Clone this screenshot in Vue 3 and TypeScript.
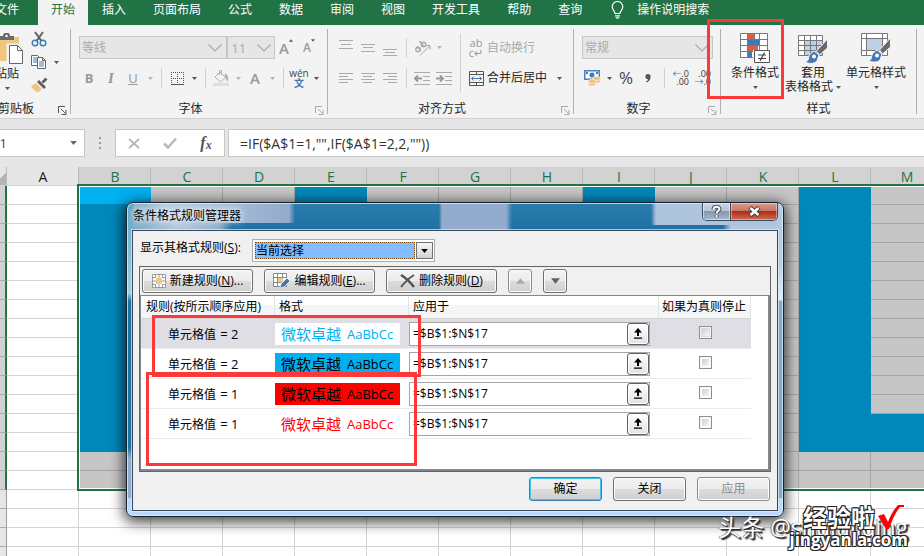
<script setup lang="ts">
import { ref } from 'vue'

interface Rule {
  label: string
  test: string
  style: string
  range: string
  stop: boolean
}

const tabs = ['插入', '页面布局', '公式', '数据', '审阅', '视图', '开发工具', '帮助', '查询']
const columns = ['A', 'B', 'C', 'D', 'E', 'F', 'G', 'H', 'I', 'J', 'K', 'L', 'M']
const rowCount = 20
const selectedRows = 16

const fontName = ref('等线')
const fontSize = ref('11')
const numberFormat = ref('常规')
const nameBox = ref('B1')
const formula = ref('=IF($A$1=1,"",IF($A$1=2,2,""))')
const scope = ref('当前选择')

const rules = ref<Rule[]>([
  { label: '单元格值', test: '= 2', style: 'cyan-text', range: '=$B$1:$N$17', stop: false },
  { label: '单元格值', test: '= 2', style: 'cyan-fill', range: '=$B$1:$N$17', stop: false },
  { label: '单元格值', test: '= 1', style: 'red-fill', range: '=$B$1:$N$17', stop: false },
  { label: '单元格值', test: '= 1', style: 'red-text', range: '=$B$1:$N$17', stop: false },
])

function cellClass(row: number, col: string): string[] {
  const out: string[] = []
  if (col !== 'A' && row <= selectedRows) out.push('picked')
  const tall = ['B', 'E', 'I', 'L'].includes(col) && row <= 14
  const foot = col === 'M' && row >= 13 && row <= 14
  if (col === 'B' && row === 1) out.push('bright')
  else if (tall || foot) out.push('blue')
  return out
}
</script>

<template>
  <div class="app">
    <svg class="defs" aria-hidden="true">
      <symbol id="caret" viewBox="0 0 5 3"><path d="M0 0h5L2.500 3z" fill="currentColor" /></symbol>
      <symbol id="chevron" viewBox="0 0 14 8"><path d="M.5.5L7 7L13.500.5" fill="none" stroke="currentColor" stroke-width="1.200" /></symbol>
      <symbol id="launcher" viewBox="0 0 9 9">
        <path d="M.5 7V.5H7M3 3l4.500 4.500M8 4v4.500H3.500" fill="none" stroke="currentColor" />
      </symbol>
    </svg>

    <nav class="tabs">
      <a class="tab file" href="#">文件</a>
      <a class="tab active" href="#">开始</a>
      <a v-for="t in tabs" :key="t" class="tab" href="#">{{ t }}</a>
      <a class="tell" href="#">
        <svg width="13" height="18" viewBox="0 0 13 18" fill="none" stroke="#fff" stroke-width="1.200">
          <path d="M4 12.500C4 10 1.200 9 1.200 5.800a5.300 5.300 0 0 1 10.600 0C11.800 9 9 10 9 12.500zM4 14.800h5M4.800 16.900h3.400" />
        </svg>
        操作说明搜索
      </a>
    </nav>

    <div class="ribbon">
      <section class="group clip">
        <div class="body">
          <button class="big paste">
            <svg width="34" height="32" viewBox="0 0 34 32">
              <path d="M2 4h28v24H2z" fill="#efc67d" />
              <path d="M10 7V3h4a3.500 3.500 0 0 1 7 0h4v4z" fill="#6a6a6a" /><circle cx="17.500" cy="3" r="1.200" fill="#fff" />
              <path d="M19 12h10l5 5v14H19z" fill="#fff" stroke="#f3f3f3" stroke-width="3" />
              <path d="M20.500 12.500h8l5 5v13h-13zM28.500 12.500v5h5" fill="#fff" stroke="#666" />
            </svg>
            <span>粘贴</span>
            <svg class="caret"><use href="#caret" /></svg>
          </button>
          <div class="clip-tools">
            <button class="slot" aria-label="剪切">
              <svg width="16" height="16" viewBox="0 0 16 16" fill="none">
                <path d="M4 1l6.500 9M12 1L5.500 10" stroke="#606060" stroke-width="2" />
                <circle cx="4" cy="12" r="2.800" stroke="#3f78b5" stroke-width="1.400" /><circle cx="12" cy="12" r="2.800" stroke="#3f78b5" stroke-width="1.400" />
              </svg>
            </button>
            <div class="row">
              <button class="slot" aria-label="复制">
                <svg width="16" height="16" viewBox="0 0 16 16" fill="#fff" stroke="#666">
                  <path d="M.5 1.500h6l2 2v8h-8z" /><path d="M2 4h4M2 6h4M2 8h4" stroke="#3f78b5" />
                  <path d="M6.500 3.500h5l3 3v8h-8zM11.500 3.500v3h3" /><path d="M8 8h5M8 10h5M8 12h5" stroke="#3f78b5" />
                </svg>
              </button>
              <button class="drop" aria-label="复制选项"><svg class="caret"><use href="#caret" /></svg></button>
            </div>
            <button class="slot" aria-label="格式刷">
              <svg width="18" height="16" viewBox="0 0 18 16">
                <path d="M1 9l5-3 6 6-4 3.500C5 14 2 12 1 9z" fill="#efc67d" />
                <path d="M7 5l2-2 7 7-2 2z" fill="#5d5d5d" /><path d="M11.500 4.500l4-4 2 2-4 4z" fill="#5d5d5d" />
              </svg>
            </button>
          </div>
        </div>
        <footer><span>剪贴板</span><button class="launch dark" aria-label="剪贴板设置"><svg width="9" height="9"><use href="#launcher" /></svg></button></footer>
      </section>

      <section class="group font">
        <div class="body stack">
          <div class="row top">
            <label class="combo wide"><select v-model="fontName" aria-label="字体"><option>等线</option></select><svg width="14" height="8"><use href="#chevron" /></svg></label>
            <label class="combo size"><select v-model="fontSize" aria-label="字号"><option>11</option></select><svg width="14" height="8"><use href="#chevron" /></svg></label>
            <button class="slot glyph"><b>A</b><svg class="caret up"><use href="#caret" /></svg></button>
            <button class="slot glyph small"><b>A</b><svg class="caret mark"><use href="#caret" /></svg></button>
          </div>
          <div class="row">
            <button class="slot letter"><b>B</b></button>
            <button class="slot letter"><i>I</i></button>
            <button class="slot letter"><u>U</u></button>
            <button class="drop pale" aria-label="下划线选项"><svg class="caret"><use href="#caret" /></svg></button>
            <span class="sep"></span>
            <button class="slot" aria-label="边框">
              <svg width="13" height="13" viewBox="0 0 13 13" stroke="#555"><path d="M0 .5h13M0 6.500h13M.5 0v12M6.500 0v12M12.500 0v12" stroke-dasharray="1 1" /><path d="M0 12.500h13" /></svg>
            </button>
            <button class="drop" aria-label="边框选项"><svg class="caret"><use href="#caret" /></svg></button>
            <span class="sep"></span>
            <button class="slot" aria-label="填充颜色">
              <svg width="16" height="16" viewBox="0 0 16 16" fill="none" stroke="#b3b0b0"><path d="M2 7l5-5 5.500 5.500L7.500 12zM6.500 5V.5h2V5" /><path d="M12 4c3 1 3 3 2.500 7-1-1.500-2-3-2.500-7z" fill="#b3b0b0" /><path d="M0 14.500h16" stroke="#e0dce0" stroke-width="3" /></svg>
            </button>
            <button class="drop pale" aria-label="填充选项"><svg class="caret"><use href="#caret" /></svg></button>
            <button class="slot glyph"><b>A</b></button>
            <button class="drop pale" aria-label="字体颜色选项"><svg class="caret"><use href="#caret" /></svg></button>
            <span class="sep"></span>
            <button class="slot wen"><span>wén</span><b>文</b></button>
            <button class="drop" aria-label="拼音选项"><svg class="caret"><use href="#caret" /></svg></button>
          </div>
        </div>
        <footer><span>字体</span><button class="launch" aria-label="字体设置"><svg width="9" height="9"><use href="#launcher" /></svg></button></footer>
      </section>

      <section class="group align">
        <div class="body">
          <div class="stack">
            <div class="row top">
              <button class="slot" aria-label="顶端对齐"><svg width="14" height="18" viewBox="0 0 14 18" stroke="#aaa"><path d="M0 1.500h14M2 5.500h10M0 9.500h14" /></svg></button>
              <button class="slot" aria-label="垂直居中"><svg width="14" height="18" viewBox="0 0 14 18" stroke="#aaa"><path d="M0 5.500h14M2 8.500h10M0 12.500h14" /></svg></button>
              <button class="slot" aria-label="底端对齐"><svg width="14" height="18" viewBox="0 0 14 18" stroke="#aaa"><path d="M0 10.500h14M2 13.500h10M0 16.500h14" /></svg></button>
              <span class="sep"></span>
              <button class="slot" aria-label="方向"><svg width="17" height="16" viewBox="0 0 17 16" fill="none" stroke="#a8a8a8"><path d="M6 15.500L15.500 6M12 5.500h4v4" /><circle cx="4" cy="9.500" r="2.200" stroke-width="1.400" /><path d="M3 6.500l4 4M5.500 1l4.500 5.500" stroke-width="1.400" /><circle cx="9.500" cy="4.500" r="2.200" stroke-width="1.400" /></svg></button>
              <button class="drop pale" aria-label="方向选项"><svg class="caret"><use href="#caret" /></svg></button>
            </div>
            <div class="row">
              <button class="slot" aria-label="左对齐"><svg width="14" height="11" viewBox="0 0 14 11" stroke="#aaa"><path d="M0 .5h14M0 3.500h9M0 6.500h14M0 9.500h9" /></svg></button>
              <button class="slot" aria-label="居中"><svg width="14" height="11" viewBox="0 0 14 11" stroke="#aaa"><path d="M0 .5h14M2 3.500h9M0 6.500h14M2 9.500h9" /></svg></button>
              <button class="slot" aria-label="右对齐"><svg width="14" height="11" viewBox="0 0 14 11" stroke="#aaa"><path d="M0 .5h14M5 3.500h9M0 6.500h14M5 9.500h9" /></svg></button>
              <span class="sep"></span>
              <button class="slot" aria-label="减少缩进"><svg width="16" height="13" viewBox="0 0 16 13" fill="none" stroke="#aaa"><path d="M0 .5h16M9 4.500h7M9 8.500h7M0 12.500h16" /><path d="M8 6.500H1M4 3.500l-3 3 3 3" stroke-width="2" stroke="#999" /></svg></button>
              <button class="slot" aria-label="增加缩进"><svg width="16" height="13" viewBox="0 0 16 13" fill="none" stroke="#aaa"><path d="M0 .5h16M9 4.500h7M9 8.500h7M0 12.500h16" /><path d="M0 6.500h7M4 3.500l3 3-3 3" stroke-width="2" stroke="#999" /></svg></button>
            </div>
          </div>
          <span class="sep tall"></span>
          <div class="stack">
            <button class="row top wide-btn pale-text">
              <span class="slot wrap"><span>ab</span><span>c↵</span></span>自动换行
            </button>
            <button class="row wide-btn">
              <span class="slot"><svg width="15" height="15" viewBox="0 0 15 15" fill="none" stroke="#555"><path d="M.5.5h14v14H.5zM.5 3.500h14M.5 11.500h14M7.500.5v3M7.500 11.500v3" /><path d="M2.500 7.500h10M4.500 5.500l-2 2 2 2M10.500 5.500l2 2-2 2" stroke="#3f78b5" /></svg></span>合并后居中
              <svg class="caret"><use href="#caret" /></svg>
            </button>
          </div>
        </div>
        <footer><span>对齐方式</span><button class="launch" aria-label="对齐设置"><svg width="9" height="9"><use href="#launcher" /></svg></button></footer>
      </section>

      <section class="group number">
        <div class="body stack">
          <div class="row top">
            <label class="combo num"><select v-model="numberFormat" aria-label="数字格式"><option>常规</option></select><svg width="14" height="8"><use href="#chevron" /></svg></label>
          </div>
          <div class="row">
            <button class="slot" aria-label="会计数字格式"><svg width="17" height="16" viewBox="0 0 17 16"><path d="M.75.75h14.500v8.500H.75z" fill="#fff" stroke="#4a80bb" stroke-width="1.500" /><circle cx="8" cy="5" r="2.500" fill="#3f78b5" /><path d="M2 2h2v2H2zM12 2h2v2h-2z" fill="#3f78b5" /><g fill="#ecc078" stroke="#f3f3f3" stroke-width=".8"><ellipse cx="12.500" cy="11" rx="4" ry="2" /><ellipse cx="12.500" cy="8.500" rx="4" ry="2" /><ellipse cx="8" cy="14" rx="4" ry="2" /><ellipse cx="8" cy="11.500" rx="4" ry="2" /></g></svg></button>
            <button class="drop" aria-label="货币选项"><svg class="caret"><use href="#caret" /></svg></button>
            <button class="slot percent">%</button>
            <button class="slot" aria-label="千位分隔"><svg width="6" height="9" viewBox="0 0 6 9"><path d="M3 0a2.600 2.600 0 0 1 2.600 2.600C5.600 6 4 8 1 8.500V7.500C2.500 7 3 6.200 3 5.200A2.600 2.600 0 0 1 3 0z" fill="#555" /></svg></button>
            <span class="sep"></span>
            <button class="slot dec"><span><em>←</em>.0</span><span>.00</span></button>
            <button class="slot dec"><span>.00</span><span><em>→</em>.0</span></button>
          </div>
        </div>
        <footer><span>数字</span><button class="launch" aria-label="数字设置"><svg width="9" height="9"><use href="#launcher" /></svg></button></footer>
      </section>

      <section class="group styles">
        <div class="body">
          <button class="big">
            <svg width="30" height="31" viewBox="0 0 30 31">
              <path d="M.5.500h27v24H.5z" fill="#fff" /><path d="M8 1h6v5H8zM8 13h10v5H8z" fill="#d9603f" /><path d="M8 7h11v5H8zM8 19h4v5H8z" fill="#4279b4" />
              <path d="M.5.500h27v24H.5zM.5 6.500h27M.5 12.500h27M.5 18.500h27M7.500.5v24M19.500.5v24M14.500.5v6" fill="none" stroke="#777" />
              <path d="M13 17h16.500v13H13z" fill="#f3f3f3" /><path d="M14.500 17.500h15v12h-15z" fill="#fff" stroke="#555" />
              <path d="M18 22h8M18 25.500h8M24.500 19.500l-4.500 8.500" stroke="#444" stroke-width="1.200" />
            </svg>
            <span>条件格式</span>
            <svg class="caret"><use href="#caret" /></svg>
          </button>
          <button class="big table-style">
            <svg width="30" height="31" viewBox="0 0 30 31">
              <path d="M.5 2.500h24v20H.5z" fill="#fff" /><path d="M7 8h18v15H7z" fill="#bcd0e6" />
              <path d="M.5 2.500h24v20H.5zM.5 7.500h24M.5 12.500h24M.5 17.500h24M6.500 2.500v20M12.500 2.500v20M18.500 2.500v20" fill="none" stroke="#777" />
              <path d="M29.500 6v9l-8 7-3-4z" fill="#6b6b6b" stroke="#f3f3f3" /><path d="M16 18l5 4-2 6c-3 3-8 3-12 1 4-1 3-3 4-6 1-2 3-4 5-5z" fill="#4279b4" stroke="#f3f3f3" /><circle cx="16" cy="23.500" r="2" fill="#fff" />
            </svg>
            <span>套用</span>
            <span class="line">表格格式 <svg class="caret"><use href="#caret" /></svg></span>
          </button>
          <button class="big cell-style">
            <svg width="30" height="31" viewBox="0 0 30 31">
              <path d="M.5.500h26v22H.5z" fill="#fff" /><path d="M6 6h15v11H6z" fill="#bcd0e6" />
              <path d="M.5.500h26v22H.5zM.5 5.500h26M.5 17.500h26M5.500.5v22M21.500.5v22" fill="none" stroke="#777" />
              <path d="M29.500 5v9l-8 7-3-4z" fill="#6b6b6b" stroke="#f3f3f3" /><path d="M16 17l5 4-2 6c-3 3-8 2-12 1 4-1 3-3 4-6 1-2 3-4 5-5z" fill="#4279b4" stroke="#f3f3f3" /><circle cx="16" cy="22.500" r="2" fill="#fff" />
            </svg>
            <span>单元格样式</span>
            <svg class="caret"><use href="#caret" /></svg>
          </button>
        </div>
        <footer><span>样式</span></footer>
      </section>
      <div class="hint hint-ribbon"></div>
    </div>

    <div class="formula-bar">
      <div class="name-box"><input v-model="nameBox" aria-label="名称框" /><svg class="name-caret"><use href="#caret" /></svg></div>
      <svg class="dots" width="3" height="12" viewBox="0 0 3 12" fill="#999"><path d="M0 0h2v2H0zM0 5h2v2H0zM0 10h2v2H0z" /></svg>
      <div class="fx-box">
        <button aria-label="取消"><svg width="12" height="11" viewBox="0 0 12 11" stroke="#b8b8b8" stroke-width="2"><path d="M1 1l10 9M11 1L1 10" /></svg></button>
        <button aria-label="输入"><svg width="14" height="12" viewBox="0 0 14 12" fill="none" stroke="#b8b8b8" stroke-width="2.500"><path d="M1 6.500l4 4L13 1.500" /></svg></button>
        <button class="fx">f<small>x</small></button>
      </div>
      <input v-model="formula" class="formula" aria-label="编辑栏" />
    </div>

    <main class="sheet">
      <table class="grid">
        <thead>
          <tr>
            <th class="corner"></th>
            <th v-for="c in columns" :key="c" :class="{ on: c !== 'A' }">{{ c }}</th>
          </tr>
        </thead>
        <tbody>
          <tr v-for="r in rowCount" :key="r">
            <th :class="{ on: r <= selectedRows }"></th>
            <td v-for="c in columns" :key="c" :class="cellClass(r, c)"></td>
          </tr>
        </tbody>
      </table>
      <div class="selection"></div>
    </main>

    <div class="dialog" role="dialog" aria-labelledby="dlg-title">
      <header class="title">
        <h1 id="dlg-title">条件格式规则管理器</h1>
        <div class="sys">
          <button class="help" aria-label="帮助"><svg width="11" height="13" viewBox="0 0 11 13" fill="none"><path d="M2.500 4.500C2.500 1 8.500 1 8.500 4c0 2-3 2-3 4.500M5.500 10v2" stroke="#434b5c" stroke-width="4" /><path d="M2.500 4.500C2.500 1 8.500 1 8.500 4c0 2-3 2-3 4.500M5.500 10v2" stroke="#fff" stroke-width="2" /></svg></button>
          <button class="close" aria-label="关闭窗口"><svg width="13" height="11" viewBox="0 0 13 11"><path d="M2 1.500l9 8M11 1.500l-9 8" stroke="#4b3b45" stroke-width="4.500" /><path d="M2.500 2l8 7M10.500 2l-8 7" stroke="#fff" stroke-width="2.600" /></svg></button>
        </div>
      </header>
      <div class="client">
        <div class="scope">
          <label for="scope">显示其格式规则(<u>S</u>):</label>
          <span class="scope-box">
            <select id="scope" v-model="scope"><option>当前选择</option></select>
            <span class="scope-arrow"><svg width="7" height="4"><use href="#caret" /></svg></span>
          </span>
        </div>
        <div class="panel">
          <div class="tools">
            <button class="btn tool">
              <svg width="14" height="14" viewBox="0 0 14 14"><path d="M.5.500h13v13H.5z" fill="#fff" /><path d="M4 4h6v6H4z" fill="#efc88c" /><path d="M.5.500h13v13H.5zM3.500 0v4M7 0v4M10.500 0v4M3.500 10v4M7 10v4M10.500 10v4M0 3.500h4M0 7h4M0 10.500h4M10 3.500h4M10 7h4M10 10.500h4" fill="none" stroke="#888" stroke-width=".8" /></svg>
              <span>新建规则(<u>N</u>)...</span>
            </button>
            <button class="btn tool">
              <svg width="17" height="16" viewBox="0 0 17 16"><path d="M.5.500h13v13H.5z" fill="#fff" /><path d="M4 4h6v6H4z" fill="#efc88c" /><path d="M.5.500h13v13H.5zM4.500 0v14M9.500 0v4M0 4.500h14M0 9.500h8" fill="none" stroke="#888" /><path d="M7 15l1-4 6-6 3 3-6 6z" fill="#4279b4" stroke="#eee" stroke-width=".8" /></svg>
              <span>编辑规则(<u>E</u>)...</span>
            </button>
            <button class="btn tool">
              <svg width="15" height="14" viewBox="0 0 15 14" fill="none" stroke="#555"><path d="M1 1c5 3 9 7 13 12" stroke-width="2.500" /><path d="M14 1C9 4 5 8 1 13" stroke-width="2" /></svg>
              <span>删除规则(<u>D</u>)</span>
            </button>
            <button class="btn move" disabled aria-label="上移"><svg class="flip" width="9" height="6"><use href="#caret" /></svg></button>
            <button class="btn move" aria-label="下移"><svg width="9" height="6"><use href="#caret" /></svg></button>
          </div>
          <div class="list">
            <table class="rules">
              <thead>
                <tr><th class="c-rule">规则(按所示顺序应用)</th><th class="c-format">格式</th><th>应用于</th><th class="c-stop">如果为真则停止</th></tr>
              </thead>
              <tbody>
                <tr v-for="(r, i) in rules" :key="i" :class="{ current: i === 0 }">
                  <td class="name">{{ r.label }} <span>{{ r.test }}</span></td>
                  <td><span class="sample" :class="r.style">微软卓越 <small>AaBbCc</small></span></td>
                  <td>
                    <span class="range">
                      <input v-model="r.range" :aria-label="'应用于 ' + (i + 1)" />
                      <button aria-label="选择区域"><svg width="10" height="11" viewBox="0 0 10 11"><path d="M5 0l4 4.500H6V8H4V4.500H1zM1 9.500h8v1.200H1z" /></svg></button>
                    </span>
                  </td>
                  <td class="stop"><input v-model="r.stop" type="checkbox" :aria-label="'如果为真则停止 ' + (i + 1)" /></td>
                </tr>
              </tbody>
            </table>
          </div>
        </div>
        <div class="actions">
          <button class="btn default">确定</button>
          <button class="btn">关闭</button>
          <button class="btn" disabled>应用</button>
        </div>
      </div>
    </div>

    <div class="hint hint-two"></div>
    <div class="hint hint-one"></div>

    <div class="credit">头条 @shujuliqing</div>
    <div class="brand">
      <div class="brand-top">经验啦<svg width="26" height="25" viewBox="0 0 26 25"><path d="M0 11l6-2 4 8C13 9 17 3 20 0h6v2h-4C17 8 14 16 11 24H8z" fill="#f00" /></svg></div>
      <div class="brand-url">jingyanla.com</div>
    </div>
  </div>
</template>

<style>
body { margin: 0; overflow: hidden; }
</style>

<style scoped>
.app { position: relative; display: flex; flex-direction: column; height: 100vh; overflow: hidden; background: #e6e6e6; font: 12px/16px "Open Sans", "Noto Sans CJK SC", sans-serif; color: #262626; }
.app * { box-sizing: border-box; }
.defs { position: absolute; width: 0; height: 0; }
button, input, select { font: inherit; color: inherit; margin: 0; padding: 0; border: 0; background: none; border-radius: 0; outline: none; }
svg { flex: none; display: block; }
.caret { width: 5px; height: 3px; color: #555; }

.tabs { display: flex; gap: 1px; height: 25px; flex: none; background: #217346; }
.tab { color: #fff; text-decoration: none; padding: 0 13px; line-height: 20px; white-space: nowrap; }
.tab.file { width: 37px; display: flex; justify-content: flex-end; padding: 0 18px 0 0; }
.tab.active { background: #f3f3f3; color: #217346; }
.tell { display: flex; gap: 13px; margin-left: 15px; color: #fff; text-decoration: none; line-height: 20px; white-space: nowrap; }
.tell svg { margin-top: 1px; }

.ribbon { position: relative; display: flex; flex: none; height: 94px; background: #f3f3f3; border-bottom: 1px solid #d0d0d0; }
.group { position: relative; display: flex; flex-direction: column; flex: none; padding-right: 1px; }
.group::after { content: ""; position: absolute; right: 0; top: 4px; bottom: 4px; width: 1px; background: #b0b0b0; }
.clip { width: 71px; }
.font { width: 257px; }
.align { width: 246px; }
.number { width: 147px; }
.styles { width: 196px; }
.body { display: flex; height: 76px; flex: none; }
.group footer { position: relative; display: flex; justify-content: center; height: 16px; line-height: 16px; padding-right: 17px; white-space: nowrap; }
.launch { position: absolute; right: 3px; top: 5px; color: #aaa; }
.launch.dark { color: #555; }
.clip footer { justify-content: flex-start; padding: 0; }
.clip footer span { margin-left: -2px; }
.row { display: flex; align-items: center; height: 26px; }
.stack { display: flex; flex-direction: column; gap: 5px; padding: 10px 7px 0; }
.row.top { height: 25px; }
.slot { display: flex; align-items: center; justify-content: center; width: 22px; height: 22px; flex: none; }
.drop { display: flex; align-items: center; justify-content: center; width: 12px; height: 22px; flex: none; }
.drop.pale .caret { color: #b5b5b5; }
.sep { width: 10px; height: 20px; flex: none; background: linear-gradient(#d0d0d0, #d0d0d0) center / 1px 100% no-repeat; }
.sep.tall { height: 58px; margin-top: 9px; }
.combo { display: flex; align-items: center; height: 23px; padding: 0 4px; margin-left: 1px; background: #e6e6e6; border: 1px solid #c6c6c6; color: #aaa; }
.combo select { appearance: none; flex: 1; width: 10px; height: 20px; line-height: 20px; padding-left: 1px; }
.combo.wide { width: 149px; padding: 0 4px 0 1px; }
.combo.size { width: 48px; margin-left: 0; padding: 0 3px 0 2px; font-size: 13px; }
.combo.num { width: 131px; padding: 0 3px 0 1px; }
.letter { color: #999; font-size: 13px; }
.letter i { font-family: "Liberation Serif", serif; font-size: 15px; font-weight: bold; }
.glyph { color: #9a9a9a; font-size: 15px; align-items: center; }
.glyph b { font-weight: 600; }
.glyph .caret { width: 4px; align-self: flex-start; margin-top: 2px; }
.glyph.small { font-size: 12px; margin-left: 1px; }
.up, .flip { transform: rotate(180deg); }
.wen { flex-direction: column; font-size: 10px; line-height: 9px; color: #444; }
.wen b { color: #4279b4; font-size: 10px; line-height: 10px; }
.percent { font-size: 17px; color: #444; }
.dec { flex-direction: column; font-size: 9px; line-height: 8px; align-items: flex-end; color: #333; padding-right: 2px; }
.dec span { display: flex; }
.dec em { font-style: normal; color: #3f78b5; }
.align .stack { padding-right: 0; }
.align .stack + .sep + .stack { padding-left: 0; }
.wide-btn { white-space: nowrap; color: #262626; }
.wide-btn .caret { margin-left: 10px; }
.pale-text { color: #aaa; }
.wrap { flex-direction: column; line-height: 10px; font-size: 11px; color: #999; }
.big { display: flex; flex-direction: column; align-items: center; flex: none; padding-top: 8px; line-height: 16px; white-space: nowrap; }
.big span { margin-top: 1px; }
.big > .caret { margin-top: 5px; }
.big .line { display: flex; align-items: center; gap: 3px; margin-top: -2px; }
.styles .body { padding-left: 4px; }
.styles .big { width: 60px; }
.styles .table-style { width: 56px; }
.styles .cell-style { width: 66px; margin-left: 2px; }
.styles footer { padding-right: 0; }
.paste { width: 30px; align-items: flex-end; }
.paste svg:first-child { margin-right: 7px; }
.paste span { margin-right: 11px; }
.paste .caret { margin-right: 20px; }
.clip-tools { display: flex; flex-direction: column; gap: 1px; padding-top: 3px; margin-left: -2px; }
.clip-tools .row { height: 22px; }

.formula-bar { display: flex; flex: none; height: 48px; padding: 10px 0; align-items: stretch; }
.name-box, .fx-box, .formula { background: #fff; border: 1px solid #c6c6c6; height: 28px; }
.name-box { display: flex; align-items: center; width: 85px; border-left: 0; padding-right: 7px; }
.name-box input { flex: 1; width: 20px; margin-left: -9px; font-size: 13px; color: #444; }
.name-caret { width: 7px; height: 4px; color: #666; }
.dots { margin: 8px 13px 0 14px; }
.fx-box { display: flex; width: 110px; }
.fx-box button { display: flex; flex: 1; align-items: center; justify-content: center; }
.fx-box .fx { font-family: "Liberation Serif", serif; font-style: italic; font-weight: bold; font-size: 16px; color: #555; }
.fx small { font-size: 12px; margin-top: 3px; }
.formula { flex: 1; min-width: 0; margin-left: 3px; padding: 0 11px; font-size: 14px; border-right: 0; color: #333; }

.sheet { position: relative; flex: 1; overflow: hidden; background: #fff; }
.grid { border-collapse: separate; border-spacing: 0; table-layout: fixed; width: 943px; }
.grid th, .grid td { height: 19px; padding: 0; border-right: 1px solid #d4d4d4; border-bottom: 1px solid #d4d4d4; line-height: 18px; }
.grid thead th { background: #e6e6e6; border-right-color: #bababa; font-size: 14px; font-weight: normal; color: #222; padding: 2px 0 0 1px; line-height: 16px; }
.grid thead th.on { background: #d2d2d2; color: #217346; }
.grid .corner { width: 7px; background: linear-gradient(135deg, #e6e6e6 50%, #b4b4b4 50%); }
.grid tbody th { background: #e6e6e6; border-right-color: #999; border-bottom-color: #aaa; }
.grid tbody th.on { background: #d2d2d2; border-right: 2px solid #217346; }
.grid td.picked { background: #c6c6c6; border-color: #a4a4a4; }
.grid td.blue { background: #0088bb; border-color: #0088bb; }
.grid td.bright { background: #00b0f0; border-color: #0088bb #00b0f0; }
.selection { position: absolute; left: 77px; right: -40px; top: 17px; height: 307px; border: 2px solid #217346; box-shadow: inset 0 0 0 1px #fff; }

.dialog { position: absolute; left: 126px; top: 202px; width: 658px; border: 1px solid #15222e; border-radius: 7px; color: #000;
  box-shadow: inset 0 0 0 1px rgba(225, 242, 255, .75), 0 3px 14px 2px rgba(0, 0, 0, .75);
  padding: 0 5px 5px;
  background:
    linear-gradient(#b9d8fa, #b9d8fa) 0 100% / 100% 18px no-repeat,
    linear-gradient(#5fa3c4, #a0cfe0 90px, #1f74a5 98px, #1f74a5 245px, #93abcd 255px, #93abcd) 0 0 / 6px 100% no-repeat,
    linear-gradient(#b3c7df, #b9cbe2 60px, #e3edf6 97px, #8aa8ca 98px) 100% 0 / 6px 100% no-repeat,
    linear-gradient(90deg, transparent, #93abcd 3px, #93abcd 67px, transparent) 312px 0 / 73px 28px no-repeat,
    linear-gradient(90deg, transparent, #aec3dc 5px) 100% 0 / 132px 22px no-repeat,
    linear-gradient(90deg, transparent, #b3c7df 8px) 100% 0 / 60px 28px no-repeat,
    linear-gradient(90deg, #74a9c6, #b8c9df 40px, #93abcd 162px, transparent 168px) 0 0 / 170px 20px no-repeat,
    linear-gradient(90deg, #74a9c6, #b8c9df 50px, #8fb1cf 92px, transparent 105px) 0 0 / 110px 28px no-repeat,
    linear-gradient(#2a7dab, #1d70a2 28px);
}
.title { display: flex; height: 27px; justify-content: space-between; }
.title h1 { margin: 0; font-size: 12px; font-weight: normal; line-height: 25px; text-shadow: 0 0 6px #fff, 0 0 8px #fff; padding-left: 1px; }
.sys { display: flex; height: 18px; border: 1px solid #3c4a5a; border-top: 0; border-radius: 0 0 5px 5px; overflow: hidden; }
.sys button { display: flex; align-items: center; justify-content: center; }
.sys .help { width: 28px; background: linear-gradient(#c9d6e5, #b3c3d6 50%, #8598b0 50%, #a5b8cf); border-right: 1px solid #54424b; box-shadow: inset 0 0 0 1px rgba(255,255,255,.5); }
.close { width: 46px; background: linear-gradient(#d89c8f, #c9705e 50%, #a92f1a 50%, #d26a4c); box-shadow: inset 0 0 0 1px rgba(255,255,255,.4); }
.client { display: flex; flex-direction: column; background: #f0f0f0; border: 1px solid #3a4a5a; box-shadow: 0 0 0 1px rgba(220, 238, 252, .7); padding: 8px 6px 9px; }
.scope { display: flex; align-items: flex-start; height: 27px; line-height: 17px; }
.scope label { width: 113px; padding-left: 1px; white-space: nowrap; }
.scope-box { display: flex; width: 183px; height: 23px; padding: 2px 1px 2px 2px; background: #fff; border: 1px solid #abadb3; gap: 1px; }
.scope-box select { appearance: none; flex: 1; min-width: 0; background: #84bdff; border: 1px dotted #7a4a10; line-height: 14px; }
.scope-arrow { display: flex; align-items: center; justify-content: center; width: 17px; border: 1px solid #707070; background: linear-gradient(#f6f6f6, #d2d2d2); pointer-events: none; }
.panel { border: 1px solid #646464; }
.tools { display: flex; gap: 11px; height: 28px; padding: 2px; }
.btn { display: flex; align-items: center; justify-content: center; width: 73px; height: 24px; border: 1px solid #707070; border-radius: 3px; background: linear-gradient(#f3f3f3, #ebebeb 50%, #dcdcdc 50%, #cfcfcf); box-shadow: inset 0 0 0 1px #fbfbfb; line-height: 16px; white-space: nowrap; }
.btn.tool { width: 111px; gap: 4px; }
.btn.move { width: 24px; color: #606060; }
.btn:disabled { color: #8c8c8c; border-color: #8c8c8c; }
.btn.move:disabled { color: #aaa; }
.btn.default { border-color: #3c7fb1; box-shadow: inset 0 0 0 1px #41c8f0; }
.list { background: #fff; border: 1px solid #828790; height: 176px; border-width: 1px 2px 2px 1px; padding-right: 17px; }
.rules { width: 100%; border-collapse: separate; border-spacing: 0; table-layout: fixed; }
.rules th { height: 23px; padding: 0 0 0 4px; text-align: left; font-weight: normal; white-space: nowrap; border-right: 1px solid #e2e4e8; border-bottom: 1px solid #d5d5d5; background: linear-gradient(#fff 40%, #f4f5f7 40%); }
.rules .c-rule { width: 134px; padding-left: 5px; }
.rules .c-format { width: 134px; }
.rules .c-stop { width: 92px; padding-left: 3px; }
.rules td { height: 30px; padding: 0; border-bottom: 1px solid #ececec; vertical-align: middle; white-space: nowrap; }
.rules .current td { background: #dfdee4; }
.rules .name { padding: 2px 0 0 27px; }
.name span { font-size: 13px; margin-left: 1px; }
.sample { display: flex; align-items: center; gap: 6px; width: 125px; height: 22px; padding-left: 6px; background: #fff; font-size: 15px; }
.sample small { font-size: 13px; }
.cyan-text { color: #00b0f0; }
.cyan-fill { background: #00b0f0; }
.red-fill { background: #f00; }
.red-text { color: #f00; }
.range { display: flex; width: 241px; height: 24px; border: 1px solid #a5a5a8; background: #fff; }
.range input { flex: 1; min-width: 0; padding: 1px 0 0 3px; }
.range button { display: flex; align-items: center; justify-content: center; width: 22px; border: 1px solid #606060; border-radius: 3px; background: linear-gradient(#fff, #e2e2e2); box-shadow: inset 0 0 0 1px #fff; }
.rules .stop { text-align: center; line-height: 0; padding-bottom: 3px; }
.stop input { appearance: none; width: 13px; height: 13px; border: 1px solid #8e8f8f; background: linear-gradient(135deg, #cbcfd5, #f6f6f6) content-box; padding: 2px; box-shadow: inset 0 0 0 1px #f4f4f4; }
.actions { display: flex; justify-content: flex-end; gap: 11px; padding: 5px 1px 0 0; }

.hint { position: absolute; border: 3px solid #fc383a; pointer-events: none; z-index: 3; }
.hint-ribbon { left: 707px; top: -6px; width: 77px; height: 80px; }
.hint-two { left: 152px; top: 315px; width: 269px; height: 62px; }
.hint-one { left: 146px; top: 372px; width: 271px; height: 94px; }

.credit { position: absolute; right: 16px; bottom: 15px; font-size: 23px; line-height: 28px; color: #fff; text-shadow: 1px 1px 1px #222, -1px 0 1px #777, 2px 2px 1px #444; white-space: nowrap; }
.brand { position: absolute; right: 16px; bottom: 7px; display: flex; flex-direction: column; align-items: flex-end; font-weight: bold; color: #fff; text-shadow: -1px -1px 0 #222, 1px -1px 0 #222, -1px 1px 0 #222, 1px 1px 0 #222, 0 1px 0 #222, 0 -1px 0 #222; }
.brand-top { display: flex; gap: 3px; margin-right: 4px; font-size: 24px; line-height: 25px; }
.brand-url { font-size: 17px; line-height: 19px; }
</style>
